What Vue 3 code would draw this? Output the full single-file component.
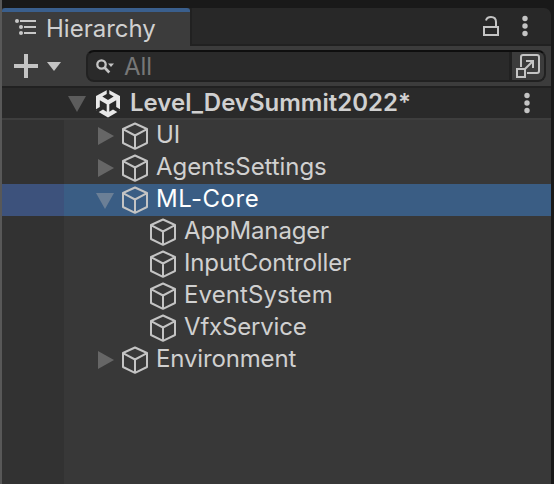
<script setup>
const rows = [
  { name: 'UI', depth: 0, fold: 'closed', tracking: 0 },
  { name: 'AgentsSettings', depth: 0, fold: 'closed', tracking: -0.07 },
  { name: 'ML-Core', depth: 0, fold: 'open', selected: true, tracking: 0.5 },
  { name: 'AppManager', depth: 1, tracking: -0.15 },
  { name: 'InputController', depth: 1, tracking: -0.14 },
  { name: 'EventSystem', depth: 1, tracking: 0.1 },
  { name: 'VfxService', depth: 1, tracking: -0.18 },
  { name: 'Environment', depth: 0, fold: 'closed', tracking: -0.15 },
]
</script>

<template>
  <div class="window">
    <div class="tabs">
      <div class="tab">
        <svg class="list-icon" width="22" height="18" viewBox="0 0 22 18">
          <g fill="#c8c8c8">
            <circle cx="2" cy="3" r="2" /><circle cx="6" cy="9" r="2" /><circle cx="6" cy="15" r="2" />
            <path d="M5 2h16v2H5zM9 8h12v2H9zM9 14h12v2H9z" />
          </g>
        </svg>
        <span class="tab-title">Hierarchy</span>
      </div>
      <div class="tab-rest">
        <svg class="lock" width="18" height="22" viewBox="0 0 18 22">
          <path d="M2 12h14v8H2zM4 5.500C4.500 3.200 6.400 2 9 2c3 0 5 2 5 5v5" fill="none" stroke="#c4c4c4" stroke-width="2" />
        </svg>
        <svg class="dots" width="6" height="22" viewBox="0 0 6 22" fill="#c4c4c4">
          <circle cx="3" cy="3.500" r="2.700" /><circle cx="3" cy="11" r="2.700" /><circle cx="3" cy="18.500" r="2.700" />
        </svg>
      </div>
    </div>

    <div class="toolbar">
      <svg class="plus" width="24" height="24" viewBox="0 0 24 24">
        <path d="M10 0h4v10h10v4H14v10h-4V14H0v-4h10z" fill="#c4c4c4" />
      </svg>
      <svg class="caret" width="14" height="9" viewBox="0 0 14 9"><path d="M0 0h14L7 9z" fill="#c4c4c4" /></svg>
      <div class="search">
        <div class="field">
          <svg class="lens" width="19" height="16" viewBox="0 0 19 16">
            <circle cx="5.500" cy="5.500" r="4.200" fill="none" stroke="#c4c4c4" stroke-width="2.300" />
            <path d="M8.500 8.500l4.800 5" stroke="#c4c4c4" stroke-width="2.600" />
            <path d="M12 4.500h6l-3 3.500z" fill="#c4c4c4" />
          </svg>
          <span>All</span>
        </div>
        <div class="picker">
          <svg width="26" height="26" viewBox="0 0 26 26" fill="none" stroke="#c4c4c4" stroke-width="2">
            <path d="M6 14V4q0-2 2-2h14q2 0 2 2v14q0 2-2 2H12" />
            <path d="M2 16h8v8H2zM10 16l8-8M11 8h7v7" />
          </svg>
        </div>
      </div>
    </div>

    <div class="scene">
      <svg class="scene-fold" width="18" height="16" viewBox="0 0 18 16"><path d="M0 0h18L9 16z" fill="#5c5c5c" /></svg>
      <svg class="unity" width="24" height="29" viewBox="0 0 24 29">
        <path d="M12 .5L24 7v14.500L12 28.500 0 21.500V7z" fill="#e9e9e9" />
        <path d="M10.700 0h2.600v5l4.400 2.500L12 11 6.300 7.500 10.700 5zM3.800 11.300l6.900 4v7.500L7 20.500l-5.500 3.200L-.5 20.500l4.300-2.500zM20.200 11.300l-6.900 4v7.500l3.700-2.300 5.500 3.200 2-3.200-4.300-2.500z" fill="#2a2a2a" />
      </svg>
      <span class="scene-name">Level_DevSummit2022*</span>
      <svg class="dots" width="6" height="22" viewBox="0 0 6 22" fill="#c4c4c4">
        <circle cx="3" cy="3.500" r="2.700" /><circle cx="3" cy="11" r="2.700" /><circle cx="3" cy="18.500" r="2.700" />
      </svg>
    </div>

    <div class="tree">
      <div v-for="row in rows" :key="row.name" class="row" :class="{ selected: row.selected, child: row.depth }">
        <div class="gutter"></div>
        <div class="fold">
          <svg v-if="row.fold === 'closed'" width="18" height="18" viewBox="0 0 18 18"><path d="M2 0l16 9-16 9z" fill="#666" /></svg>
          <svg v-if="row.fold === 'open'" width="18" height="18" viewBox="0 0 18 18"><path d="M0 2h18L9 18z" fill="#6b7f96" /></svg>
        </div>
        <svg class="cube" width="26" height="28" viewBox="0 0 26 28" fill="none" stroke="#c4c4c4" stroke-width="2" stroke-linejoin="round">
          <path d="M13 1.500L25 7v14l-12 5.800L1 21V7zM1 7.200l12 6.300 12-6.300M13 13.500v13" />
        </svg>
        <span class="name" :style="{ letterSpacing: row.tracking + 'px' }">{{ row.name }}</span>
      </div>
      <div class="rest"><div class="gutter"></div></div>
    </div>
  </div>
</template>

<style>
body { background: #191919; }
</style>

<style scoped>
.window {
  box-sizing: border-box;
  width: 554px;
  height: 484px;
  padding-top: 8px;
  border-right: 3px solid #191919;
  border-left: 2px solid #585858;
  background: #191919;
  font-family: Inter, sans-serif;
  font-size: 24px;
  color: #d0d0d0;
  display: flex;
  flex-direction: column;
  overflow: hidden;
}
svg { display: block; flex: none; }
.tabs { display: flex; height: 38px; flex: none; background: #282828; border-radius: 0 7px 0 0; }
.tab {
  box-sizing: border-box;
  width: 188px;
  height: 38px;
  border-top: 4px solid #3a5f8d;
  border-radius: 3px 3px 0 0;
  background: #3c3c3c;
  display: flex;
  align-items: center;
  padding-left: 13px;
}
.list-icon { margin-top: -4px; }
.tab-title { margin-left: 9px; line-height: 34px; white-space: nowrap; }
.tab-rest {
  box-sizing: border-box;
  flex: 1;
  height: 38px;
  border-bottom: 2px solid #212121;
  border-left: 2px solid #212121;
  display: flex;
  justify-content: flex-end;
  padding: 7px 23px 0 0;
}
.tab-rest .dots { margin-left: 22px; }
.toolbar { height: 40px; flex: none; background: #3c3c3c; display: flex; align-items: center; padding-left: 12px; }
.caret { margin-left: 9px; }
.search {
  box-sizing: border-box;
  display: flex;
  margin-left: 25px;
  width: 460px;
  height: 32px;
  border: 2px solid #212121;
  border-top-color: #0e0e0e;
  border-radius: 8px;
  background: #2a2a2a;
  overflow: hidden;
}
.field { flex: 1; display: flex; align-items: center; padding-left: 8px; color: #777; }
.lens { margin-top: 2px; }
.field span { margin-left: 9px; }
.picker {
  box-sizing: border-box;
  width: 35px;
  border-left: 3px solid #212121;
  background: #3c3c3c;
  padding: 1px 0 0 3px;
}
.scene {
  box-sizing: border-box;
  height: 34px;
  flex: none;
  background: #2a2a2a;
  border-top: 2px solid #212121;
  border-bottom: 2px solid #3e3e3e;
  display: flex;
  align-items: center;
  padding: 0 21px 0 66px;
}
.scene-fold { margin-top: 2px; }
.unity { margin-left: 10px; }
.scene-name { font-weight: 600; margin-left: 10px; line-height: 30px; }
.scene .dots { margin-left: auto; }
.tree { flex: 1; background: #383838; display: flex; flex-direction: column; }
.row { display: flex; height: 32px; align-items: center; flex: none; }
.gutter { width: 62px; height: 100%; background: #323232; flex: none; }
.fold { width: 18px; margin-left: 32px; flex: none; }
.cube { margin-left: 8px; margin-top: 0; position: relative; top: 0; }
.child .cube { margin-left: 36px; }
.name { margin-left: 8px; line-height: 32px; margin-top: -2px; white-space: nowrap; }
.selected { background: #3a5d84; color: #fff; }
.selected .gutter { background: #3d527c; }
.rest { flex: 1; }
</style>
